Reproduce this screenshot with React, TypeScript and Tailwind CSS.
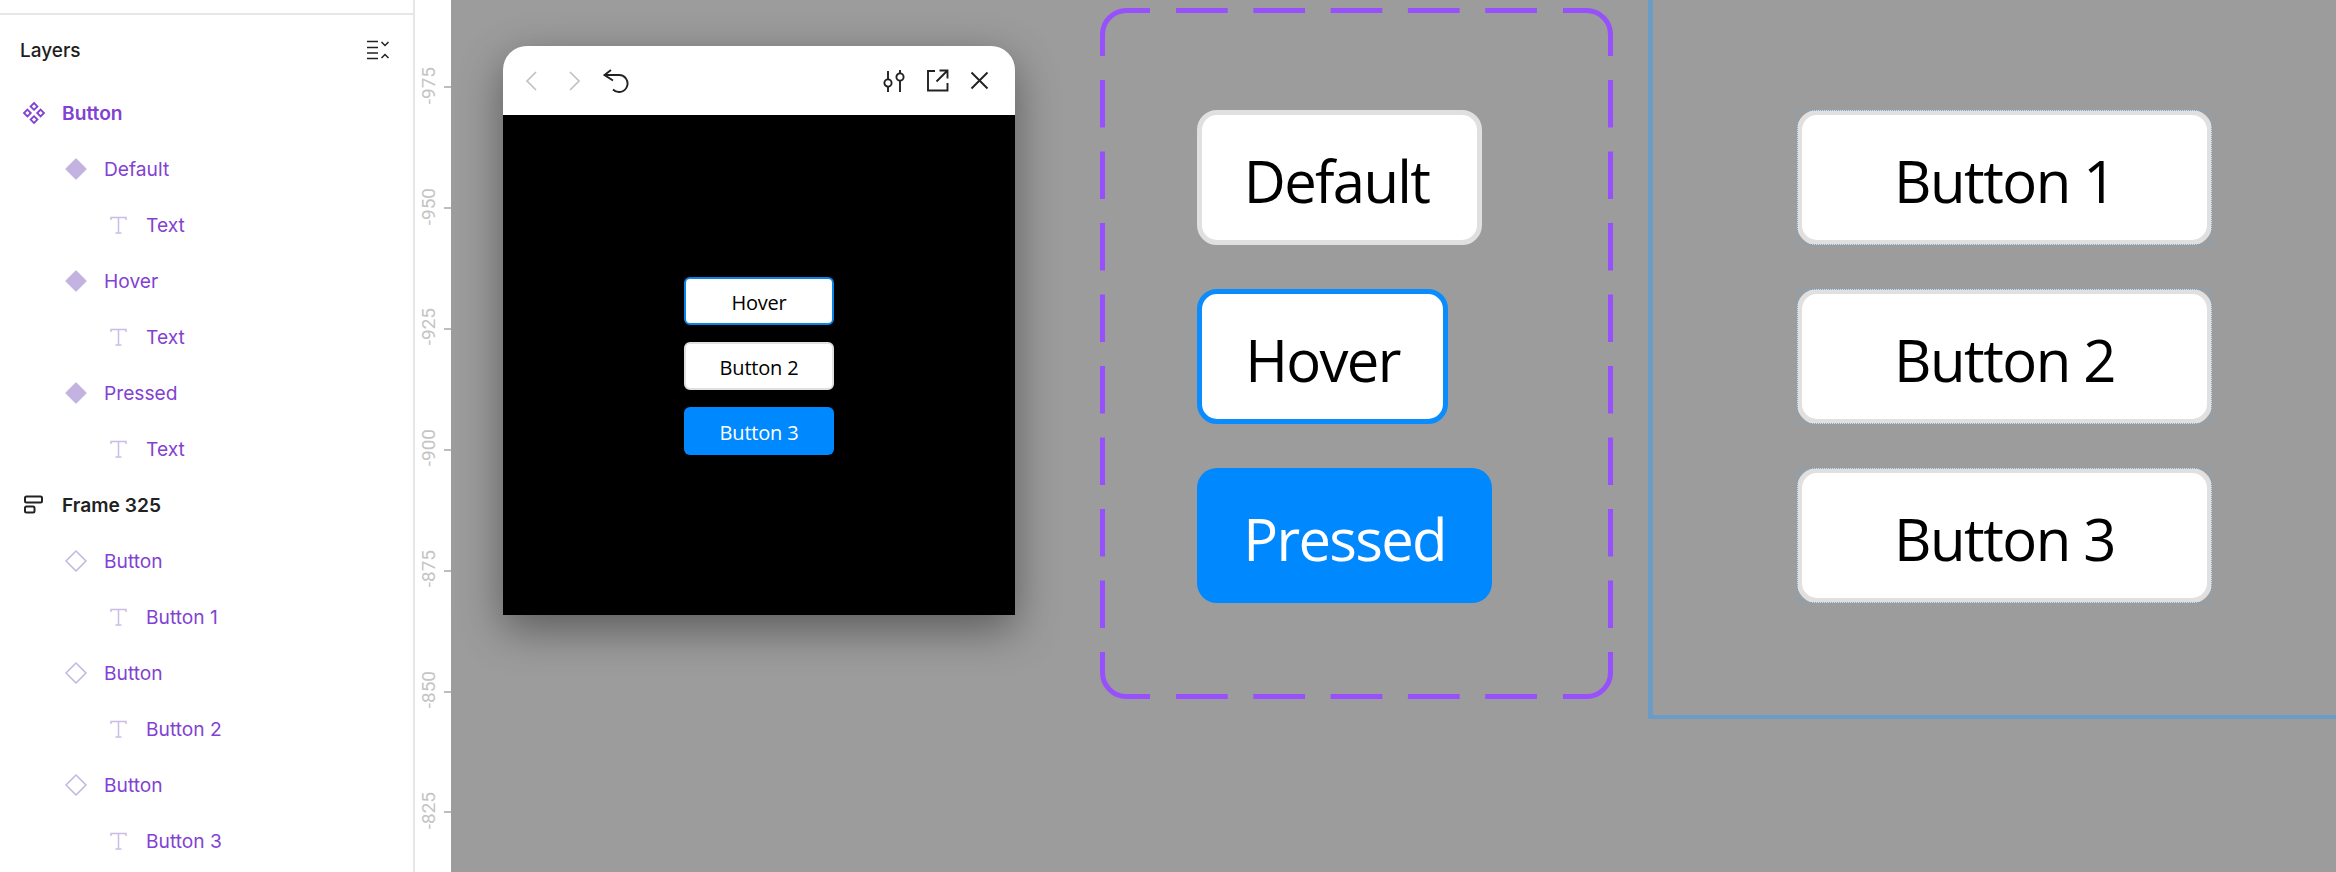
import React from "react";

type LayerKind = "component" | "variant" | "instance" | "text" | "frame";

interface Layer {
  name: string;
  kind: LayerKind;
  level: number;
}

const layers: Layer[] = [
  { name: "Button", kind: "component", level: 0 },
  { name: "Default", kind: "variant", level: 1 },
  { name: "Text", kind: "text", level: 2 },
  { name: "Hover", kind: "variant", level: 1 },
  { name: "Text", kind: "text", level: 2 },
  { name: "Pressed", kind: "variant", level: 1 },
  { name: "Text", kind: "text", level: 2 },
  { name: "Frame 325", kind: "frame", level: 0 },
  { name: "Button", kind: "instance", level: 1 },
  { name: "Button 1", kind: "text", level: 2 },
  { name: "Button", kind: "instance", level: 1 },
  { name: "Button 2", kind: "text", level: 2 },
  { name: "Button", kind: "instance", level: 1 },
  { name: "Button 3", kind: "text", level: 2 },
];

const rulerTicks = ["-975", "-950", "-925", "-900", "-875", "-850", "-825"];

function LayerIcon({ kind }: { kind: LayerKind }) {
  if (kind === "component") {
    return (
      <svg width="24" height="24" viewBox="0 0 24 24" fill="none" stroke="#8142d3" strokeWidth="1.8">
        <path d="M12 2 15.4 5.4 12 8.8 8.6 5.4Z" />
        <path d="M12 15.2 15.4 18.6 12 22 8.6 18.6Z" />
        <path d="M5.4 8.6 8.8 12 5.4 15.4 2 12Z" />
        <path d="M18.6 8.6 22 12 18.6 15.4 15.2 12Z" />
      </svg>
    );
  }
  if (kind === "variant") {
    return (
      <svg width="24" height="24" viewBox="0 0 24 24" fill="#c4b2e0" stroke="#c4b2e0" strokeWidth="2" strokeLinejoin="round">
        <path d="M12 2.5 21.5 12 12 21.5 2.5 12Z" />
      </svg>
    );
  }
  if (kind === "instance") {
    return (
      <svg width="24" height="24" viewBox="0 0 24 24" fill="none" stroke="#c4b8e2" strokeWidth="1.6" strokeLinejoin="round">
        <path d="M12 2 22 12 12 22 2 12Z" />
      </svg>
    );
  }
  if (kind === "text") {
    return (
      <svg width="24" height="24" viewBox="0 0 24 24" fill="none" stroke="#c9bde3" strokeWidth="1.5">
        <path d="M5 7V4.5H20V7M12.5 4.5V20M9.5 20H15.5" />
      </svg>
    );
  }
  return (
    <svg width="24" height="24" viewBox="0 0 24 24" fill="none" stroke="#222" strokeWidth="2">
      <rect x="3" y="3.5" width="17" height="6" rx="1.5" />
      <rect x="3" y="13.5" width="9.5" height="6" rx="1.5" />
    </svg>
  );
}

function Sidebar() {
  return (
    <aside className="w-[415px] shrink-0 h-full bg-white border-r-2 border-[#e6e6e6] pt-[13px] overflow-hidden font-['Inter',sans-serif]">
      <div className="border-t-2 border-[#e6e6e6]">
        <div className="h-[70px] flex items-center justify-between pl-5 pr-[23px]">
          <span className="pt-[2px] text-[19px] font-medium text-[#1e1e1e]">Layers</span>
          <svg width="24" height="20" viewBox="0 0 24 20" fill="none" stroke="#222" strokeWidth="1.5">
            <path d="M1 1.5H12M1 7.5H12M1 13H12M1 18.5H12" />
            <path d="M15.5 2 19 5.5 22.5 2M15.5 18 19 14.5 22.5 18" />
          </svg>
        </div>
        {layers.map((layer, i) => (
          <div
            key={i}
            className={`h-14 flex items-center gap-4 ${
              layer.level === 0 ? "pl-[22px]" : layer.level === 1 ? "pl-[64px]" : "pl-[106px]"
            }`}
          >
            <LayerIcon kind={layer.kind} />
            <span
              className={`text-[19.2px] ${
                layer.kind === "frame"
                  ? "font-semibold text-[#222222]"
                  : layer.kind === "component"
                    ? "font-semibold text-[#8142d3]"
                    : "text-[#8142d3]"
              }`}
            >
              {layer.name}
            </span>
          </div>
        ))}
      </div>
    </aside>
  );
}

function Ruler() {
  return (
    <div className="w-[36px] shrink-0 h-full bg-white pt-[27px] overflow-hidden font-['Roboto',sans-serif]">
      {rulerTicks.map((tick) => (
        <div key={tick} className="h-[120.83px] flex items-center justify-end gap-[6px]">
          <span className="[writing-mode:vertical-rl] rotate-180 mb-[4px] text-[19px] leading-none text-[#c4c4c4]">{tick}</span>
          <div className="w-[7px] h-[2px] bg-[#bdbdbd]" />
        </div>
      ))}
    </div>
  );
}

function PreviewWindow() {
  return (
    <div className="absolute left-[52px] top-[46px] w-[512px] h-[569px] rounded-t-[24px] shadow-[0_14px_44px_rgba(0,0,0,0.42)] flex flex-col">
      <div className="h-[69px] shrink-0 bg-white rounded-t-[24px] flex items-center justify-between pl-[22px] pr-[26px]">
        <div className="flex items-center">
          <svg width="12" height="20" viewBox="0 0 12 20" fill="none" stroke="#c2c2c2" strokeWidth="1.7">
            <path d="M11 1 2 10 11 19" />
          </svg>
          <svg className="ml-[32px]" width="12" height="20" viewBox="0 0 12 20" fill="none" stroke="#c2c2c2" strokeWidth="1.7">
            <path d="M1 1 10 10 1 19" />
          </svg>
          <svg className="ml-[22px]" width="26" height="24" viewBox="0 0 26 24" fill="none" stroke="#222" strokeWidth="1.9">
            <path d="M8 1 1.5 6 10 11.5" />
            <path d="M1.5 6H16A8.5 8.5 0 1 1 10 20.5" />
          </svg>
        </div>
        <div className="flex items-center">
          <svg width="24" height="24" viewBox="0 0 24 24" fill="none" stroke="#222" strokeWidth="1.9">
            <circle cx="6" cy="14" r="3.6" />
            <circle cx="18" cy="8" r="3.6" />
            <path d="M6 2V10.4M6 17.6V23M18 1V4.4M18 11.6V23" />
          </svg>
          <svg className="ml-[20px]" width="23" height="23" viewBox="0 0 23 23" fill="none" stroke="#222" strokeWidth="1.9">
            <path d="M9 2H2V21.5H21.5V14" />
            <path d="M10.5 12.5 21 2M13.5 1.5H21.5V9.5" />
          </svg>
          <svg className="ml-[21px]" width="19" height="19" viewBox="0 0 19 19" fill="none" stroke="#222" strokeWidth="1.9">
            <path d="M1.5 1.5 17.5 17.5M17.5 1.5 1.5 17.5" />
          </svg>
        </div>
      </div>
      <div className="flex-1 bg-black flex flex-col items-center pt-[162px] gap-[17px] font-['Open_Sans',sans-serif] text-[20px] tracking-[-0.2px]">
        <div className="w-[150px] h-[48px] pt-[3px] rounded-[6px] bg-white border-2 border-[#0a84e6] flex items-center justify-center text-black">
          Hover
        </div>
        <div className="w-[150px] h-[48px] pt-[3px] rounded-[6px] bg-white border-2 border-[#e0e0e0] flex items-center justify-center text-black">
          Button 2
        </div>
        <div className="w-[150px] h-[48px] pt-[3px] rounded-[6px] bg-[#0088ff] flex items-center justify-center text-white">
          Button 3
        </div>
      </div>
    </div>
  );
}

function DashedFrame() {
  return (
    <div className="absolute left-[649px] top-[8px] w-[513px] h-[691px] pl-[97px] pt-[102px] flex flex-col items-start gap-[44px] font-['Open_Sans',sans-serif] text-[58px] tracking-[-1.7px]">
      <svg className="absolute inset-0" width="513" height="691" fill="none" stroke="#9750fb" strokeWidth="5">
        <path d="M2.5 48V26.5A24 24 0 0 1 26.5 2.5H50" />
        <path d="M463 2.5H486.5A24 24 0 0 1 510.5 26.5V48" />
        <path d="M2.5 644V664.5A24 24 0 0 0 26.5 688.5H50" />
        <path d="M463 688.5H486.5A24 24 0 0 0 510.5 664.5V644" />
        <path d="M76 2.5H437M76 688.5H437" strokeDasharray="51.7 25.6" />
        <path d="M2.5 72V620M510.5 72V620" strokeDasharray="47.5 24" />
      </svg>
      <div className="relative w-[285px] h-[135px] pt-[6px] pr-[6px] rounded-[20px] bg-white border-[5px] border-[#e0e0e0] flex items-center justify-center text-black">
        Default
      </div>
      <div className="relative w-[251px] h-[135px] pt-[6px] rounded-[20px] bg-white border-[5px] border-[#0a8cff] flex items-center justify-center text-black">
        Hover
      </div>
      <div className="relative w-[295px] h-[135px] pt-[6px] rounded-[20px] bg-[#0088ff] flex items-center justify-center text-white">
        Pressed
      </div>
    </div>
  );
}

function InstanceFrame() {
  return (
    <div className="absolute left-[1197px] top-0 right-0 h-[719px] border-l-[5px] border-b-[4px] border-[#6a9cc6] pl-[144px] pt-[110px] flex flex-col items-start gap-[44px] font-['Open_Sans',sans-serif] text-[58px] tracking-[-1.5px]">
      {["Button 1", "Button 2", "Button 3"].map((label) => (
        <div key={label} className="w-[415px] h-[135px] outline-1 outline-dotted -outline-offset-1 outline-[#74a6d0]">
          <div className="w-full h-full pt-[6px] rounded-[20px] bg-white border-[5px] border-[#e0e0e0] flex items-center justify-center text-black">
            {label}
          </div>
        </div>
      ))}
    </div>
  );
}

export default function App() {
  return (
    <div className="w-[2336px] h-[872px] flex overflow-hidden bg-[#9c9c9c]">
      <Sidebar />
      <Ruler />
      <main className="relative flex-1 h-full overflow-hidden bg-[#9c9c9c]">
        <PreviewWindow />
        <DashedFrame />
        <InstanceFrame />
      </main>
    </div>
  );
}
